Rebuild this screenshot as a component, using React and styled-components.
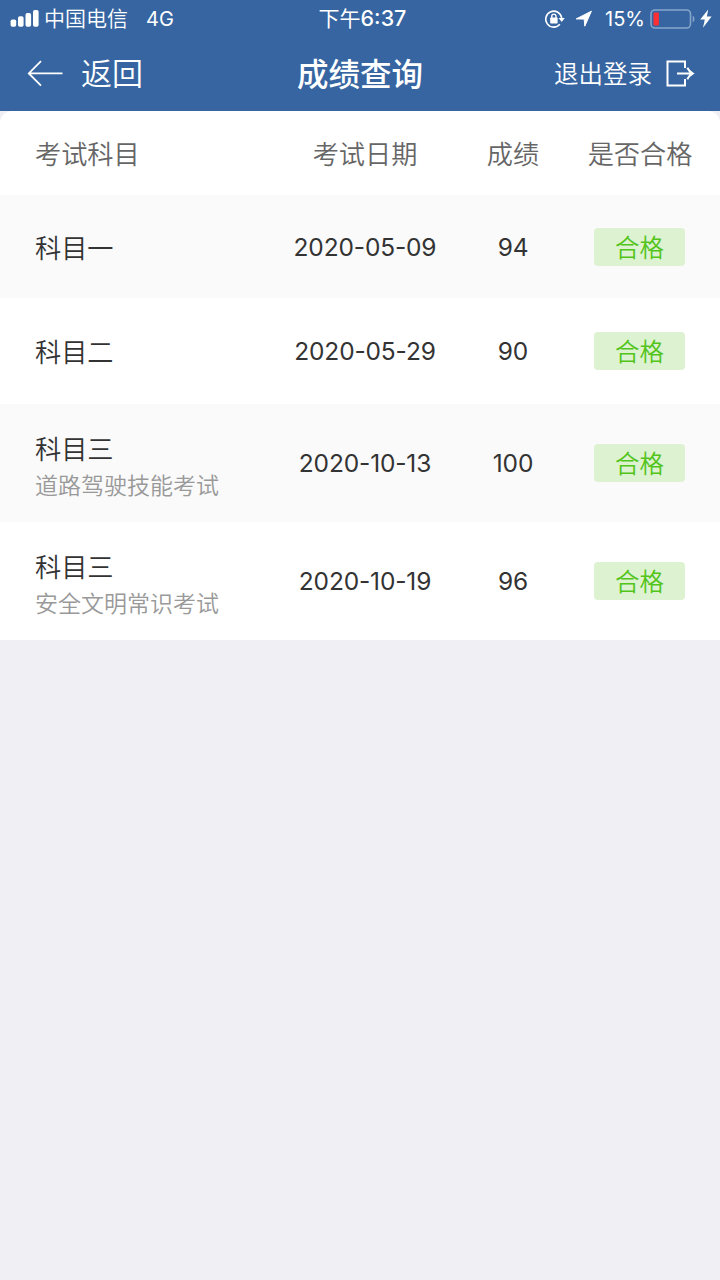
import React from "react";
import styled, { createGlobalStyle } from "styled-components";

const scores = [
  { subject: "科目一", date: "2020-05-09", score: 94, height: 103 },
  { subject: "科目二", date: "2020-05-29", score: 90, height: 106 },
  {
    subject: "科目三",
    note: "道路驾驶技能考试",
    date: "2020-10-13",
    score: 100,
    height: 118,
  },
  {
    subject: "科目三",
    note: "安全文明常识考试",
    date: "2020-10-19",
    score: 96,
    height: 118,
  },
];

const SignalIcon = () => (
  <svg width="30" height="18" viewBox="0 0 30 18" fill="#fff">
    <rect x="0.6" y="9.5" width="5.6" height="7.2" rx="1.8" />
    <rect x="8" y="6.3" width="5.6" height="10.4" rx="1.8" />
    <rect x="15.5" y="3.1" width="5.6" height="13.6" rx="1.8" />
    <rect x="23" y="0" width="5.6" height="16.7" rx="1.8" />
  </svg>
);

const LockIcon = () => (
  <svg width="20" height="18" viewBox="0 0 20 18" fill="none" stroke="#fff">
    <path d="M14.9 14.3A8 8 0 1 1 16.7 8" strokeWidth="1.6" />
    <path d="M13.6 8h6.2l-3.1 4z" fill="#fff" stroke="none" />
    <rect x="5.2" y="7.6" width="7.4" height="5.8" rx="0.7" fill="#fff" stroke="none" />
    <path d="M6.8 8.2V6.2a2.1 2.1 0 0 1 4.2 0v2" strokeWidth="1.4" />
  </svg>
);

const LocationIcon = () => (
  <svg width="18" height="18" viewBox="0 0 18 18" fill="#fff">
    <path d="M16.4 1.2L1.2 8.9l8 .2.6 7.1z" stroke="#fff" strokeWidth="1" strokeLinejoin="round" />
  </svg>
);

const BatteryIcon = () => (
  <svg width="46" height="20" viewBox="0 0 46 20" fill="none">
    <rect x="1" y="1" width="39.5" height="18" rx="4" stroke="#86a5cb" strokeWidth="1.6" />
    <rect x="3.5" y="3.5" width="5.4" height="13" rx="1.2" fill="#fc2f35" />
    <path d="M42.7 6.8c2.4.9 2.4 5.5 0 6.4z" fill="#86a5cb" />
  </svg>
);

const BoltIcon = () => (
  <svg width="12" height="20" viewBox="0 0 12 20" fill="#fff">
    <path d="M8.2.4L.2 10.6h4.6L3 18.7 11.6 7.4H6.9z" />
  </svg>
);

const BackIcon = () => (
  <svg width="36" height="28" viewBox="0 0 36 28" fill="none" stroke="#fff" strokeWidth="1.8">
    <path d="M14 1.2L1.8 13.4 14 25.6M1.8 13.4H35.5" />
  </svg>
);

const LogoutIcon = () => (
  <svg width="30" height="28" viewBox="0 0 30 28" fill="none" stroke="#fff" strokeWidth="2">
    <path d="M20 8V1.5H2.5v24H20V19M12 13.5h15.5M22.3 7.7q2 4 5.3 5.8-3.3 1.800-5.300 5.800" />
  </svg>
);

const App = () => {
  return (
    <Page>
      <GlobalStyle />
      <Header>
        <StatusBar>
          <StatusLeft>
            <SignalIcon />
            <Carrier>中国电信</Carrier>
            <Network>4G</Network>
          </StatusLeft>
          <Clock>
            下午<b>6:37</b>
          </Clock>
          <StatusRight>
            <LockIcon />
            <LocationIcon />
            <Percent>15%</Percent>
            <BatteryIcon />
            <BoltIcon />
          </StatusRight>
        </StatusBar>
        <NavBar>
          <BackButton>
            <BackIcon />
            返回
          </BackButton>
          <Title>成绩查询</Title>
          <LogoutButton>
            退出登录
            <LogoutIcon />
          </LogoutButton>
        </NavBar>
      </Header>
      <Table>
        <TableHead>
          <SubjectCell>考试科目</SubjectCell>
          <HeadCell>考试日期</HeadCell>
          <HeadCell>成绩</HeadCell>
          <HeadCell>是否合格</HeadCell>
        </TableHead>
        {scores.map((item) => (
          <Row key={item.date} $height={item.height}>
            <SubjectCell $tall={Boolean(item.note)}>
              <Subject>{item.subject}</Subject>
              {item.note && <Note>{item.note}</Note>}
            </SubjectCell>
            <NumberCell>{item.date}</NumberCell>
            <NumberCell>{item.score}</NumberCell>
            <Cell>
              <Badge>合格</Badge>
            </Cell>
          </Row>
        ))}
      </Table>
    </Page>
  );
};

const GlobalStyle = createGlobalStyle`
  * {
    box-sizing: border-box;
  }
  body {
    margin: 0;
    background-color: #efeff4;
  }
`;

const Page = styled.div`
  width: 720px;
  min-height: 1280px;
  background-color: #efeff4;
  font-family: Inter, "Noto Sans CJK SC", sans-serif;
  font-weight: 350;
`;

const Header = styled.header`
  height: 111px;
  background-color: #3665a1;
  color: white;
`;

const StatusBar = styled.div`
  height: 37px;
  padding: 0 8px 0 10px;
  display: grid;
  grid-template-columns: 1fr auto 1fr;
  align-items: center;
  font-size: 21px;
  line-height: 36px;
`;

const StatusLeft = styled.div`
  display: flex;
  align-items: center;
`;

const Carrier = styled.span`
  margin-left: 4px;
`;

const Network = styled.span`
  margin-left: 18px;
  font-size: 20px;
  font-weight: 400;
`;

const Clock = styled.div`
  padding-left: 3px;
  font-weight: 400;

  b {
    font-weight: 500;
    font-size: 21.5px;
  }
`;

const StatusRight = styled.div`
  display: flex;
  align-items: center;
  justify-content: flex-end;

  svg + svg {
    margin-left: 4px;
  }

  svg:first-child + svg {
    margin-left: 10px;
  }
`;

const Percent = styled.span`
  margin: 0 5px 0 12px;
  font-size: 20px;
  font-weight: 400;
`;

const NavBar = styled.nav`
  height: 74px;
  padding: 0 25px 0 27px;
  display: grid;
  grid-template-columns: 1fr auto 1fr;
  align-items: center;
`;

const BackButton = styled.div`
  display: flex;
  align-items: center;
  gap: 18px;
  font-size: 31px;
  line-height: 40px;
`;

const Title = styled.h1`
  margin: 1px 2px 0 0;
  font-size: 31.5px;
  font-weight: 500;
  line-height: 40px;
`;

const LogoutButton = styled.div`
  display: flex;
  align-items: center;
  justify-content: flex-end;
  gap: 13px;
  font-size: 24.5px;
  line-height: 40px;
`;

const Table = styled.section`
  background-color: white;
  border-radius: 12px 12px 0 0;
`;

const TableHead = styled.div`
  height: 84px;
  display: grid;
  grid-template-columns: 264px 202px 94px 160px;
  align-items: center;
  font-size: 26.2px;
  line-height: 37px;
  color: #666;
`;

const Row = styled(TableHead)`
  height: ${({ $height }) => $height}px;
  color: #333;

  &:nth-child(even) {
    background-color: #fafafa;
  }
`;

const Cell = styled.div`
  display: flex;
  justify-content: center;
  padding-right: 1px;
  white-space: nowrap;
`;

const HeadCell = styled(Cell)`
  padding: 3px 0 0;
`;

const NumberCell = styled(Cell)`
  padding: 1px 0 0;
  font-size: 24.5px;
  font-weight: 400;
  letter-spacing: -0.15px;
`;

const SubjectCell = styled.div`
  padding: ${({ $tall }) => ($tall ? "10px" : "3px")} 0 0 35px;
`;

const Subject = styled.div`
  font-size: 26.2px;
`;

const Note = styled.div`
  font-size: 23px;
  color: #999;
`;

const Badge = styled.span`
  width: 91px;
  height: 38px;
  border-radius: 4px;
  background-color: #ddf2d1;
  color: #52c41a;
  font-size: 24.5px;
  line-height: 40px;
  text-align: center;
`;

export default App;
